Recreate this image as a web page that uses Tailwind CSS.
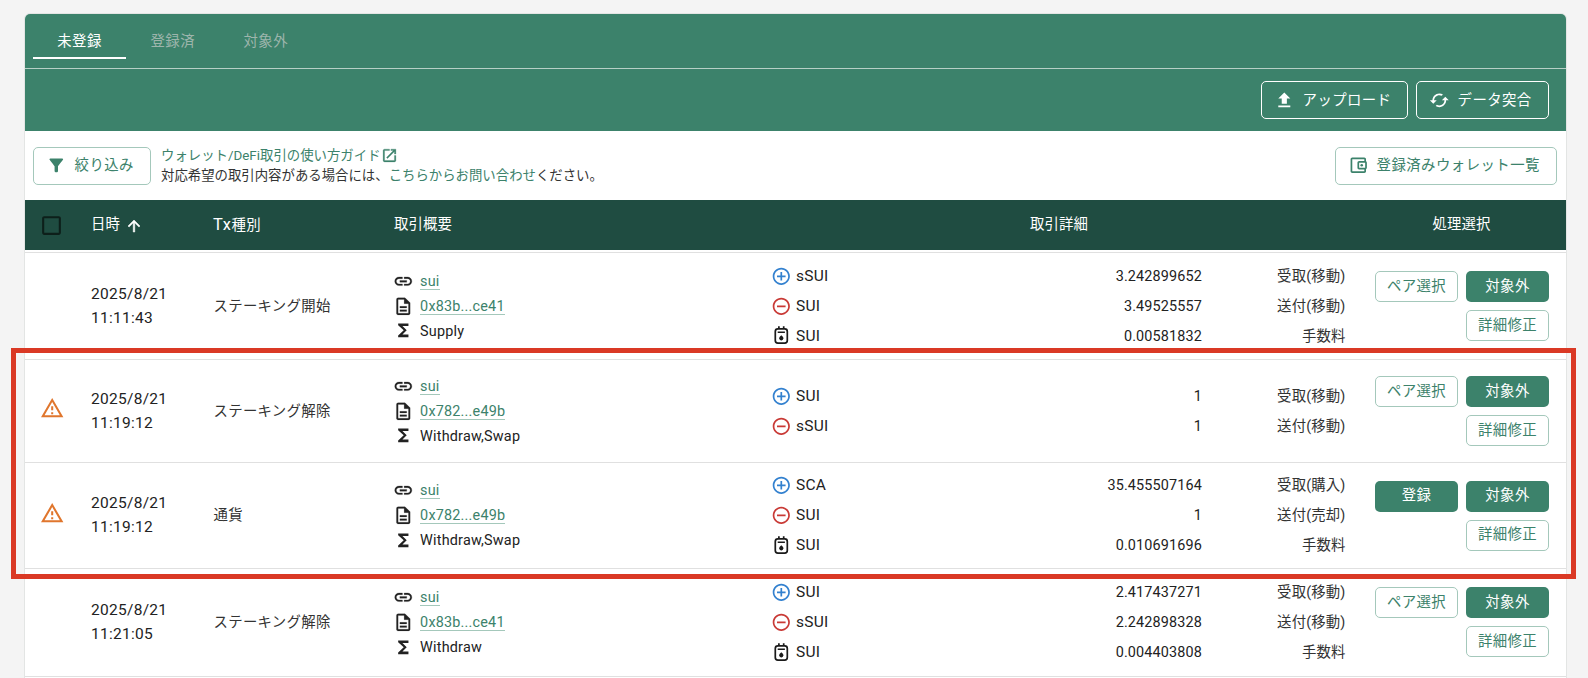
<!DOCTYPE html>
<html lang="ja">
  <head>
    <meta charset="UTF-8" />
    <meta name="viewport" content="width=device-width, initial-scale=1.0" />
    <title>ウォレット/DeFi取引</title>
    <script src="https://cdn.jsdelivr.net/npm/@tailwindcss/browser@4"></script>
  </head>
  <body class="relative h-[678px] overflow-hidden bg-[#f4f4f4] font-[Roboto,'Noto_Sans_CJK_JP',sans-serif] text-[14.4px] leading-none tracking-[0.15px] text-[#222]">
    <!-- icon set -->
    <svg class="hidden">
      <symbol id="i-upload" viewBox="0 0 24 24"><path d="M5 20h14v-2H5v2zm0-10h4v6h6v-6h4l-7-7-7 7z" /></symbol>
      <symbol id="i-cached" viewBox="0 0 24 24"><path d="M19 8l-4 4h3c0 3.31-2.69 6-6 6-1.01 0-1.97-.25-2.8-.7l-1.46 1.46C8.97 19.54 10.43 20 12 20c4.42 0 8-3.58 8-8h3l-4-4zM6 12c0-3.31 2.69-6 6-6 1.01 0 1.97.25 2.8.7l1.46-1.46C15.03 4.46 13.57 4 12 4c-4.42 0-8 3.58-8 8H1l4 4 4-4H6z" /></symbol>
      <symbol id="i-filter" viewBox="0 0 24 24"><path d="M4.25 5.61C6.27 8.2 10 13 10 13v6c0 .55.45 1 1 1h2c.55 0 1-.45 1-1v-6s3.72-4.8 5.74-7.39c.51-.66.04-1.61-.79-1.61H5.04c-.83 0-1.3.95-.79 1.61z" /></symbol>
      <symbol id="i-wallet" viewBox="0 0 24 24"><path d="M21 7.28V5c0-1.1-.9-2-2-2H5c-1.11 0-2 .9-2 2v14c0 1.1.89 2 2 2h14c1.1 0 2-.9 2-2v-2.28c.59-.35 1-.98 1-1.72V9c0-.74-.41-1.37-1-1.72zM20 9v6h-7V9h7zM5 19V5h14v2h-6c-1.1 0-2 .9-2 2v6c0 1.1.9 2 2 2h6v2H5z" /><circle cx="16" cy="12" r="1.5" /></symbol>
      <symbol id="i-open" viewBox="0 0 24 24"><path d="M19 19H5V5h7V3H5c-1.11 0-2 .9-2 2v14c0 1.1.89 2 2 2h14c1.1 0 2-.9 2-2v-7h-2v7zM14 3v2h3.59l-9.83 9.83 1.41 1.41L19 6.41V10h2V3h-7z" stroke="currentColor" stroke-width="0.4" /></symbol>
      <symbol id="i-checkbox" viewBox="0 0 24 24"><path d="M19 5v14H5V5h14m0-2H5c-1.1 0-2 .9-2 2v14c0 1.1.9 2 2 2h14c1.1 0 2-.9 2-2V5c0-1.1-.9-2-2-2z" /></symbol>
      <symbol id="i-arrow" viewBox="0 0 24 24"><path d="M4 12l1.41 1.41L11 7.83V20h2V7.83l5.58 5.59L20 12l-8-8-8 8z" stroke="currentColor" stroke-width="0.7" /></symbol>
      <symbol id="i-warning" viewBox="0 0 24 24"><path d="M12 5.99L19.53 19H4.47L12 5.99M12 2L1 21h22L12 2zm1 14h-2v2h2v-2zm0-6h-2v4h2v-4z" /></symbol>
      <symbol id="i-link" viewBox="0 0 24 24"><path d="M3.9 12c0-1.71 1.39-3.1 3.1-3.1h4V7H7c-2.76 0-5 2.24-5 5s2.24 5 5 5h4v-1.9H7c-1.71 0-3.1-1.39-3.1-3.1zM8 13h8v-2H8v2zm9-6h-4v1.9h4c1.71 0 3.1 1.39 3.1 3.1s-1.39 3.1-3.1 3.1h-4V17h4c2.76 0 5-2.24 5-5s-2.24-5-5-5z" stroke="currentColor" stroke-width="0.3" /></symbol>
      <symbol id="i-doc" viewBox="0 0 24 24"><path d="M8 16h8v2H8zm0-4h8v2H8zm6-10H6c-1.1 0-2 .9-2 2v16c0 1.1.89 2 1.99 2H18c1.1 0 2-.9 2-2V8l-6-6zm4 18H6V4h7v5h5v11z" stroke="currentColor" stroke-width="0.2" /></symbol>
      <symbol id="i-sigma" viewBox="0 0 24 24"><path d="M18 4H6v2l6.5 6L6 18v2h12v-3h-7l5-5-5-5h7z" /></symbol>
      <symbol id="i-plus" viewBox="0 0 24 24"><path d="M13 7h-2v4H7v2h4v4h2v-4h4v-2h-4V7zm-1-5C6.48 2 2 6.48 2 12s4.48 10 10 10 10-4.48 10-10S17.52 2 12 2zm0 18c-4.41 0-8-3.59-8-8s3.59-8 8-8 8 3.59 8 8-3.59 8-8 8z" /></symbol>
      <symbol id="i-minus" viewBox="0 0 24 24"><path d="M7 11v2h10v-2H7zm5-9C6.48 2 2 6.48 2 12s4.48 10 10 10 10-4.48 10-10S17.52 2 12 2zm0 18c-4.41 0-8-3.59-8-8s3.59-8 8-8 8 3.59 8 8-3.59 8-8 8z" /></symbol>
      <symbol id="i-fee" viewBox="0 0 24 24">
        <rect x="5" y="4.6" width="14" height="16.6" rx="3" fill="none" stroke="currentColor" stroke-width="2" />
        <path d="M8.2 1.6h2v3h-2zM13.8 1.6h2v3h-2zM7.8 7.6h8.4v1.8H7.8zM12 12l1.8 1.8a2.5 2.5 0 1 1-3.6 0z" />
      </symbol>
    </svg>

    <div class="mx-6 mt-[13px] w-[1543px] rounded-t-md border border-[#e3e5e4] bg-white">
      <!-- tabs -->
      <div class="flex h-[55px] rounded-t-[5px] border-b border-[#b7d0c6] bg-[#3c826b] pl-2 pb-[9px] text-[14.4px] tracking-[0.41px]">
        <button class="w-[93px] border-b-[2px] border-white pt-[13px] text-white">未登録</button>
        <button class="w-[93.5px] border-b-[2px] border-transparent pt-[13px] text-[#9db5ac]">登録済</button>
        <button class="w-[92.5px] border-b-[2px] border-transparent pt-[13px] text-[#9db5ac]">対象外</button>
      </div>

      <div class="flex h-[62px] items-center justify-end gap-2 bg-[#3c826b] pr-[17px] tracking-[0.41px] text-white">
        <button class="flex h-[38px] w-[147px] items-center rounded-[5px] border border-white pl-[12px]">
          <svg class="mr-[8px] size-[20.6px] fill-current"><use href="#i-upload" /></svg><span class="pt-[2px]">アップロード</span>
        </button>
        <button class="flex h-[38px] w-[133px] items-center rounded-[5px] border border-white pl-[12px]">
          <svg class="mr-[8px] size-[20.6px] fill-current"><use href="#i-cached" /></svg><span class="pt-[2px]">データ突合</span>
        </button>
      </div>

      <!-- filter bar -->
      <div class="flex h-[69px] items-center pl-2 pr-[9px] text-[#3c826b]">
        <button class="flex h-[38px] w-[118px] items-center rounded-[5px] border border-[#a4c8bb] pl-[12px] tracking-[0.41px]">
          <svg class="mr-[8px] size-[20.6px] fill-current"><use href="#i-filter" /></svg><span class="pt-[2px]">絞り込み</span>
        </button>
        <div class="ml-[10px] text-[13.4px] leading-[19.5px] tracking-normal">
          <p class="flex items-center">ウォレット/DeFi取引の使い方ガイド<svg class="size-[17px] fill-current"><use href="#i-open" /></svg></p>
          <p class="text-[#333]">対応希望の取引内容がある場合には、<a class="text-[#3c826b]">こちらからお問い合わせ</a>ください。</p>
        </div>
        <button class="ml-auto flex h-[38px] w-[222px] items-center rounded-[5px] border border-[#a4c8bb] pl-[12px] tracking-[0.45px]">
          <svg class="mr-[8px] size-[20.6px] fill-current"><use href="#i-wallet" /></svg><span class="pt-[2px]">登録済みウォレット一覧</span>
        </button>
      </div>

      <!-- table header -->
      <div class="grid h-[50px] grid-cols-[66px_122px_181px_379px_572px_1fr] items-center bg-[#1f4c41] text-white [&>span]:pt-px">
        <svg class="ml-[14px] size-[25px] fill-[#0d1f1a]"><use href="#i-checkbox" /></svg>
        <span class="flex items-center">日時<svg class="ml-[5px] mt-px size-[18px] fill-current"><use href="#i-arrow" /></svg></span>
        <span><span class="text-[16.4px] tracking-[0.6px]">Tx</span><span class="tracking-[0.3px]">種別</span></span>
        <span>取引概要</span>
        <span class="text-center">取引詳細</span>
        <span class="pl-[12px] text-center">処理選択</span>
      </div>

      <div id="rows" class="mt-[2px]"></div>
    </div>

    <!-- highlighted transactions -->
    <div class="absolute left-[11px] top-[348px] h-[231px] w-[1565px] border-[5px] border-[#da3925]"></div>

    <script>
      const rows = [
        {
          height: 107, time: "11:11:43", type: "ステーキング開始", tx: "0x83b...ce41", fn: "Supply",
          details: [["plus", "sSUI", "3.242899652", "受取(移動)"], ["minus", "SUI", "3.49525557", "送付(移動)"], ["fee", "SUI", "0.00581832", "手数料"]],
        },
        {
          height: 103, warn: true, time: "11:19:12", type: "ステーキング解除", tx: "0x782...e49b", fn: "Withdraw,Swap",
          details: [["plus", "SUI", "1", "受取(移動)"], ["minus", "sSUI", "1", "送付(移動)"]],
        },
        {
          height: 106, warn: true, time: "11:19:12", type: "通貨", tx: "0x782...e49b", fn: "Withdraw,Swap", registrable: true,
          details: [["plus", "SCA", "35.455507164", "受取(購入)"], ["minus", "SUI", "1", "送付(売却)"], ["fee", "SUI", "0.010691696", "手数料"]],
        },
        {
          height: 107.5, time: "11:21:05", type: "ステーキング解除", tx: "0x83b...ce41", fn: "Withdraw",
          details: [["plus", "SUI", "2.417437271", "受取(移動)"], ["minus", "sSUI", "2.242898328", "送付(移動)"], ["fee", "SUI", "0.004403808", "手数料"]],
        },
        { height: 3 },
      ];

      const iconColor = { plus: "text-[#3381cf]", minus: "text-[#c93a36]", fee: "text-[#1a1a1a]" };
      const outlined = "h-[31px] rounded-[5px] border border-[#a4c8bb] text-[#3c826b] tracking-[0.41px] pt-px";
      const filled = "h-[31px] rounded-[5px] bg-[#3c826b] text-white tracking-[0.41px] pt-px";
      const icon = (name, cls) => `<svg class="size-[20.6px] shrink-0 fill-current ${cls || ""}"><use href="#i-${name}" /></svg>`;

      const detail = ([kind, token, amount, label]) => `
        <div class="flex h-[29.8px] items-center">
          ${icon(kind, iconColor[kind])}
          <span class="ml-[4.5px] pt-px text-[15.5px] tracking-[0.2px]">${token}</span>
          <span class="ml-auto pt-[2px]">${amount}</span>
          <span class="w-[143.5px] pt-[2px] text-right text-[#333]">${label}</span>
        </div>`;

      const row = (r) => `
        <div class="grid grid-cols-[66px_122.5px_179.5px_378px_574.5px_1fr] items-center border-t border-[#e0e0e0]" style="height:${r.height}px">
          ${!r.time ? "" : `
          <div>${r.warn ? `<svg class="-mt-[5px] ml-[14.5px] size-[24.4px] fill-[#e0762d]"><use href="#i-warning" /></svg>` : ""}</div>
          <div class="pt-px text-[15.5px] leading-[23.6px] tracking-[0.28px]">2025/8/21<br />${r.time}</div>
          <div class="pt-[2px] tracking-[0.3px] text-[#333]">${r.type}</div>
          <div class="leading-[15px] tracking-[0.2px] [&>div]:flex [&>div]:h-[24.8px] [&>div]:items-center [&>div]:gap-[6.5px]">
            <div>${icon("link")}<a class="mt-px border-b border-[#a4c8bb] text-[#3c826b]">sui</a></div>
            <div>${icon("doc")}<a class="mt-[2px] border-b border-[#a4c8bb] text-[#3c826b]">${r.tx}</a></div>
            <div>${icon("sigma")}<span class="pt-px">${r.fn}</span></div>
          </div>
          <div>${r.details.map(detail).join("")}</div>
          <div class="ml-[29.5px] grid w-[174px] grid-cols-2 gap-2">
            <button class="${r.registrable ? filled : outlined}">${r.registrable ? "登録" : "ペア選択"}</button>
            <button class="${filled}">対象外</button>
            <button class="${outlined} col-start-2">詳細修正</button>
          </div>`}
        </div>`;

      document.getElementById("rows").innerHTML = rows.map(row).join("");
    </script>
  </body>
</html>
